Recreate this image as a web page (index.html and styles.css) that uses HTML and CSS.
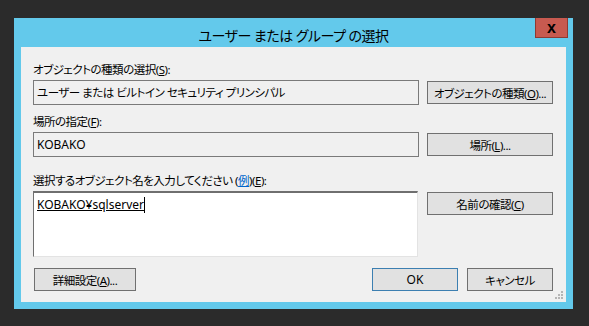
FILE: index.html
```html
<!DOCTYPE html>
<html lang="ja">
	<head>
		<meta charset="UTF-8" />
		<meta name="viewport" content="width=device-width, initial-scale=1.0" />
		<title>ユーザー または グループ の選択</title>
		<link rel="stylesheet" href="styles.css">
	</head>
	<body>
		<section class="window">
			<div class="title-bar">
				<span class="title">ユーザー または グループ の選択</span>
				<button class="close-btn">x</button>
			</div>
			<div class="client">
				<div class="field-label">オブジェクトの種類の選択(<u>S</u>):</div>
				<div class="field-row">
					<div class="textbox">ユーザー または ビルトイン セキュリティ プリンシパル</div>
					<button class="btn">オブジェクトの種類(<u>O</u>)...</button>
				</div>

				<div class="field-label label-second">場所の指定(<u>F</u>):</div>
				<div class="field-row">
					<div class="textbox textbox-latin">KOBAKO</div>
					<button class="btn">場所(<u>L</u>)...</button>
				</div>

				<div class="field-label label-third">
					選択するオブジェクト名を入力してください (<a href="#" class="link">例</a>)(<u>E</u>):
				</div>
				<div class="field-row row-top">
					<div class="textarea"><span class="resolved">KOBAKO¥sqlserver</span><span class="caret"></span></div>
					<button class="btn btn-check">名前の確認(<u>C</u>)</button>
				</div>

				<div class="bottom-row">
					<button class="btn btn-advanced">詳細設定(<u>A</u>)...</button>
					<div class="bottom-right">
						<button class="btn btn-small btn-default">OK</button>
						<button class="btn btn-small">キャンセル</button>
					</div>
				</div>

				<svg class="grip" viewBox="0 0 8 8" width="8" height="8">
					<rect x="6" y="0" width="2" height="2" fill="#b5b5b5" />
					<rect x="3" y="3" width="2" height="2" fill="#b5b5b5" />
					<rect x="6" y="3" width="2" height="2" fill="#b5b5b5" />
					<rect x="0" y="6" width="2" height="2" fill="#b5b5b5" />
					<rect x="3" y="6" width="2" height="2" fill="#b5b5b5" />
					<rect x="6" y="6" width="2" height="2" fill="#b5b5b5" />
				</svg>
			</div>
		</section>
	</body>
</html>
```

FILE: styles.css
```css
body {
	box-sizing: border-box;
	margin: 0;
	padding: 18px 0 0 14px;
	height: 326px;
	background-color: #2b2b2b;
	font-family: "Noto Sans", "Noto Sans CJK JP", sans-serif;
	font-feature-settings: "palt";
	font-size: 11.5px;
	letter-spacing: -0.5px;
	color: #000;
}

.window {
	box-sizing: border-box;
	width: 559px;
	height: 291px;
	background-color: #63c9eb;
	padding: 0 7px 7px 7px;
	display: flex;
	flex-direction: column;
}

.title-bar {
	position: relative;
	height: 29px;
	display: flex;
	justify-content: center;
	align-items: center;
	padding-top: 4px;
	box-sizing: border-box;
}

.title {
	font-size: 14px;
	color: #000;
}

.close-btn {
	position: absolute;
	top: 0;
	right: -2px;
	width: 33px;
	height: 20px;
	margin: 0;
	padding: 0;
	background-color: #c75a50;
	border: 1px solid #8e3a33;
	border-top: none;
	font-family: "Liberation Sans", sans-serif;
	font-weight: bold;
	font-size: 16px;
	letter-spacing: 0;
	line-height: 16px;
	color: #000;
}

.client {
	position: relative;
	flex: 1;
	background-color: #f0f0f0;
	padding: 15px 13px 0 12px;
}

.field-label {
	line-height: 16px;
	margin-bottom: 2px;
	white-space: nowrap;
}

.label-second {
	margin-top: 9px;
}

.label-third {
	margin-top: 16px;
}

.link {
	color: #0066cc;
}

.field-row {
	display: grid;
	grid-template-columns: 386px 126px;
	column-gap: 8px;
	align-items: center;
}

.row-top {
	align-items: start;
}

.textbox {
	box-sizing: border-box;
	height: 25px;
	border: 1px solid #7a7a7a;
	padding: 0 3px;
	line-height: 23px;
	white-space: nowrap;
}

.textbox-latin {
	font-size: 12px;
	letter-spacing: 0;
}

.textarea {
	box-sizing: border-box;
	width: 385px;
	height: 66px;
	background-color: #fff;
	border: 1px solid;
	border-color: #6f6f6f #e3e3e3 #e3e3e3 #6f6f6f;
	border-top-width: 2px;
	padding: 3px 3px;
	font-size: 12px;
	letter-spacing: 0;
	line-height: 17px;
}

.resolved {
	text-decoration: underline;
}

.caret {
	display: inline-block;
	width: 1px;
	height: 16px;
	background-color: #000;
	vertical-align: -4px;
}

.btn {
	box-sizing: border-box;
	height: 23px;
	margin: 0;
	padding: 0;
	background-color: #e1e1e1;
	border: 1px solid #707070;
	font-family: inherit;
	font-feature-settings: inherit;
	font-size: 11.5px;
	letter-spacing: -0.5px;
	color: #000;
	white-space: nowrap;
}

.btn-check {
	margin-top: 1px;
}

.bottom-row {
	display: flex;
	justify-content: space-between;
	margin-top: 11px;
	padding-left: 1px;
}

.btn-advanced {
	width: 102px;
}

.bottom-right {
	display: flex;
	gap: 9px;
}

.btn-small {
	width: 86px;
}

.btn-default {
	border-color: #3c7fb1;
	font-size: 12px;
	letter-spacing: 0;
}

.grip {
	position: absolute;
	right: 3px;
	bottom: 3px;
}
```
